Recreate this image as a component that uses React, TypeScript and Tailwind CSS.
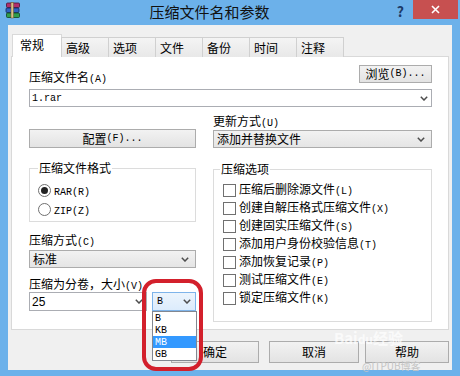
import React from "react";

const M = ({ children }: { children: React.ReactNode }) => (
  <span className="font-[family-name:'Liberation_Mono',monospace] text-[10px]">{children}</span>
);

const Chevron = ({ className = "" }: { className?: string }) => (
  <svg width="8" height="5" viewBox="0 0 8 5" className={className}>
    <polyline points="0.8,0.8 4,4 7.2,0.8" fill="none" stroke="#4d4d4d" strokeWidth="1.5" />
  </svg>
);

const Btn = ({ children, className = "" }: { children: React.ReactNode; className?: string }) => (
  <div
    className={
      "flex items-center justify-center border border-[#acacac] bg-gradient-to-b from-[#f2f2f2] to-[#e3e3e3] text-[12px] leading-none " +
      className
    }
  >
    {children}
  </div>
);

const Check = ({ children }: { children: React.ReactNode }) => (
  <div className="flex h-[18px] items-center gap-[3px]">
    <div className="h-[13px] w-[13px] border border-[#707070] bg-white" />
    <span className="text-[12px] leading-none">{children}</span>
  </div>
);

const Radio = ({ on, children }: { on?: boolean; children: React.ReactNode }) => (
  <div className="flex h-[19px] items-center gap-[3px]">
    <div className="flex h-[13px] w-[13px] items-center justify-center rounded-full border border-[#707070] bg-white">
      {on && <div className="h-[7px] w-[7px] rounded-full bg-[#222]" />}
    </div>
    <span className="leading-none">{children}</span>
  </div>
);

function WinRarIcon() {
  return (
    <svg width="17" height="17" viewBox="0 0 17 17">
      <rect x="1.5" y="1" width="13" height="4.5" rx="1" fill="#b1306c" stroke="#4a1230" strokeWidth="0.8" />
      <rect x="1" y="6" width="13" height="4.5" rx="1" fill="#2f63c2" stroke="#132a5a" strokeWidth="0.8" />
      <rect x="1.5" y="11" width="13" height="4.5" rx="1" fill="#2f9d4c" stroke="#124220" strokeWidth="0.8" />
      <rect x="6" y="0.5" width="2.5" height="15.5" fill="#d8c08a" stroke="#6b5526" strokeWidth="0.5" />
    </svg>
  );
}

export default function App() {
  const tabs = ["高级", "选项", "文件", "备份", "时间", "注释"];
  return (
    <div className="relative flex h-[376px] w-[460px] flex-col overflow-hidden bg-[#6cb1ea] font-[family-name:'Noto_Sans_CJK_SC',sans-serif] text-black">
      {/* title bar */}
      <div className="relative flex h-[25px] items-start">
        <div className="ml-[5px] mt-[2px]">
          <WinRarIcon />
        </div>
        <div className="flex-1 pt-[2px] text-center text-[15px] leading-[19px] text-[#111]">压缩文件名和参数</div>
        <div className="mr-[9px] mt-[3px] text-[14px] font-bold leading-[16px] text-[#1c3a68]">?</div>
        <div className="mr-[2px] flex h-[19px] w-[45px] items-center justify-center bg-[#c75050]">
          <svg width="9" height="9" viewBox="0 0 9 9">
            <path d="M1 1 L8 8 M8 1 L1 8" stroke="white" strokeWidth="1.6" />
          </svg>
        </div>
      </div>

      {/* body */}
      <div className="mx-[8px] mb-[6px] flex flex-1 flex-col bg-[#f0f0f0] px-[3px] pt-[9px]">
        {/* tabs */}
        <div className="relative z-10 -mb-px flex h-[23px] items-end pl-[1px] text-[12px]">
          <div className="flex h-[23px] w-[50px] items-start border border-b-0 border-[#d9d9d9] bg-white pl-[7px] pt-[3px] leading-[14px]">
            常规
          </div>
          {tabs.map((t) => (
            <div
              key={t}
              className="-ml-px flex h-[20px] w-[48px] items-center border border-b-0 border-[#d0d0d0] bg-gradient-to-b from-[#f4f4f4] to-[#e8e8e8] pl-[4px] leading-none first:ml-0"
            >
              {t}
            </div>
          ))}
        </div>

        {/* panel */}
        <div className="h-[274px] border border-[#d9d9d9] bg-white pl-[17px] pr-[16px] pt-[8px] text-[12px]">
          <div className="flex h-[18px] items-start justify-between">
            <span className="pt-[6px] leading-[12px]">
              压缩文件名<M>(A)</M>
            </span>
            <Btn className="h-[18px] w-[73px]">
              浏览<M>(B)...</M>
            </Btn>
          </div>
          <div className="mt-[6px] flex h-[18px] items-center justify-between border border-[#abadb3] bg-white pl-[2px] pr-[3px]">
            <M>1.rar</M>
            <Chevron />
          </div>

          <div className="mt-[6px] flex gap-[17px]">
            {/* left column */}
            <div className="flex w-[167px] flex-col">
              <Btn className="mt-[16px] h-[19px] w-full">
                配置<M>(F)...</M>
              </Btn>
              <div className="relative mt-[20px] h-[54px] border border-[#dcdcdc] pl-[8px] pt-[12px]">
                <span className="absolute -top-[8px] left-[8px] bg-white px-[1px] leading-[14px]">压缩文件格式</span>
                <Radio on>
                  <M>RAR(R)</M>
                </Radio>
                <Radio>
                  <M>ZIP(Z)</M>
                </Radio>
              </div>
              <div className="mt-[11px] h-[14px] leading-[14px]">
                压缩方式<M>(C)</M>
              </div>
              <div className="mt-[3px] flex h-[18px] items-center justify-between border border-[#acacac] bg-gradient-to-b from-[#f2f2f2] to-[#e5e5e5] pl-[3px] pr-[6px]">
                <span className="leading-none">标准</span>
                <Chevron />
              </div>
              <div className="mt-[9px] h-[14px] leading-[14px]">
                压缩为分卷，大小<M>(V)</M>
              </div>
              <div className="mt-[1px] flex h-[19px] gap-[5px]">
                <div className="flex w-[118px] items-center justify-between border border-[#abadb3] bg-white pl-[2px] pr-[3px]">
                  <span className="font-[family-name:'Liberation_Sans',sans-serif] text-[12px] leading-none">25</span>
                  <Chevron />
                </div>
                <div className="flex w-[44px] items-center justify-between border border-[#7eb4ea] bg-gradient-to-b from-[#ecf4fc] to-[#dcecfc] pl-[4px] pr-[4px]">
                  <M>B</M>
                  <Chevron />
                </div>
              </div>
            </div>

            {/* right column */}
            <div className="flex w-[219px] flex-col">
              <div className="h-[16px] leading-[16px]">
                更新方式<M>(U)</M>
              </div>
              <div className="mt-[1px] flex h-[18px] items-center justify-between border border-[#acacac] bg-gradient-to-b from-[#f2f2f2] to-[#e5e5e5] pl-[3px] pr-[6px]">
                <span className="leading-none">添加并替换文件</span>
                <Chevron />
              </div>
              <div className="relative mt-[21px] h-[153px] border border-[#dcdcdc] pl-[9px] pt-[11px]">
                <span className="absolute -top-[8px] left-[6px] bg-white px-[1px] leading-[14px]">压缩选项</span>
                <Check>
                  压缩后删除源文件<M>(L)</M>
                </Check>
                <Check>
                  创建自解压格式压缩文件<M>(X)</M>
                </Check>
                <Check>
                  创建固实压缩文件<M>(S)</M>
                </Check>
                <Check>
                  添加用户身份校验信息<M>(T)</M>
                </Check>
                <Check>
                  添加恢复记录<M>(P)</M>
                </Check>
                <Check>
                  测试压缩文件<M>(E)</M>
                </Check>
                <Check>
                  锁定压缩文件<M>(K)</M>
                </Check>
              </div>
            </div>
          </div>
        </div>

        {/* buttons */}
        <div className="mt-[11px] flex h-[22px] justify-end">
          <Btn className="h-[22px] w-[88px] border-[#5c9ad6]">确定</Btn>
          <Btn className="ml-[10px] h-[22px] w-[90px]">取消</Btn>
          <Btn className="ml-[6px] h-[22px] w-[84px]">帮助</Btn>
        </div>
      </div>

      {/* open dropdown list */}
      <div className="absolute left-[152px] top-[311px] w-[45px] border border-[#828790] bg-white text-[12px]">
        {["B", "KB", "MB", "GB"].map((u) => (
          <div
            key={u}
            className={
              "flex h-[12px] items-center pl-[2px] " + (u === "MB" ? "bg-[#3399ff] text-white" : "")
            }
          >
            <M>{u}</M>
          </div>
        ))}
      </div>

      {/* red highlight ring */}
      <div className="pointer-events-none absolute left-[142px] top-[279px] h-[92px] w-[61px] rounded-[14px] border-[4px] border-[#d3202c]" />

      {/* watermark */}
      <div className="pointer-events-none absolute left-[334px] top-[330px] text-[15px] font-bold leading-none text-white/70">
        Bai<span className="text-[12px]">du</span>经验
      </div>
      <div className="pointer-events-none absolute left-[362px] top-[361px] text-[10px] leading-none text-[#c4c4c4]">
        @ITPUB博客
      </div>
    </div>
  );
}
